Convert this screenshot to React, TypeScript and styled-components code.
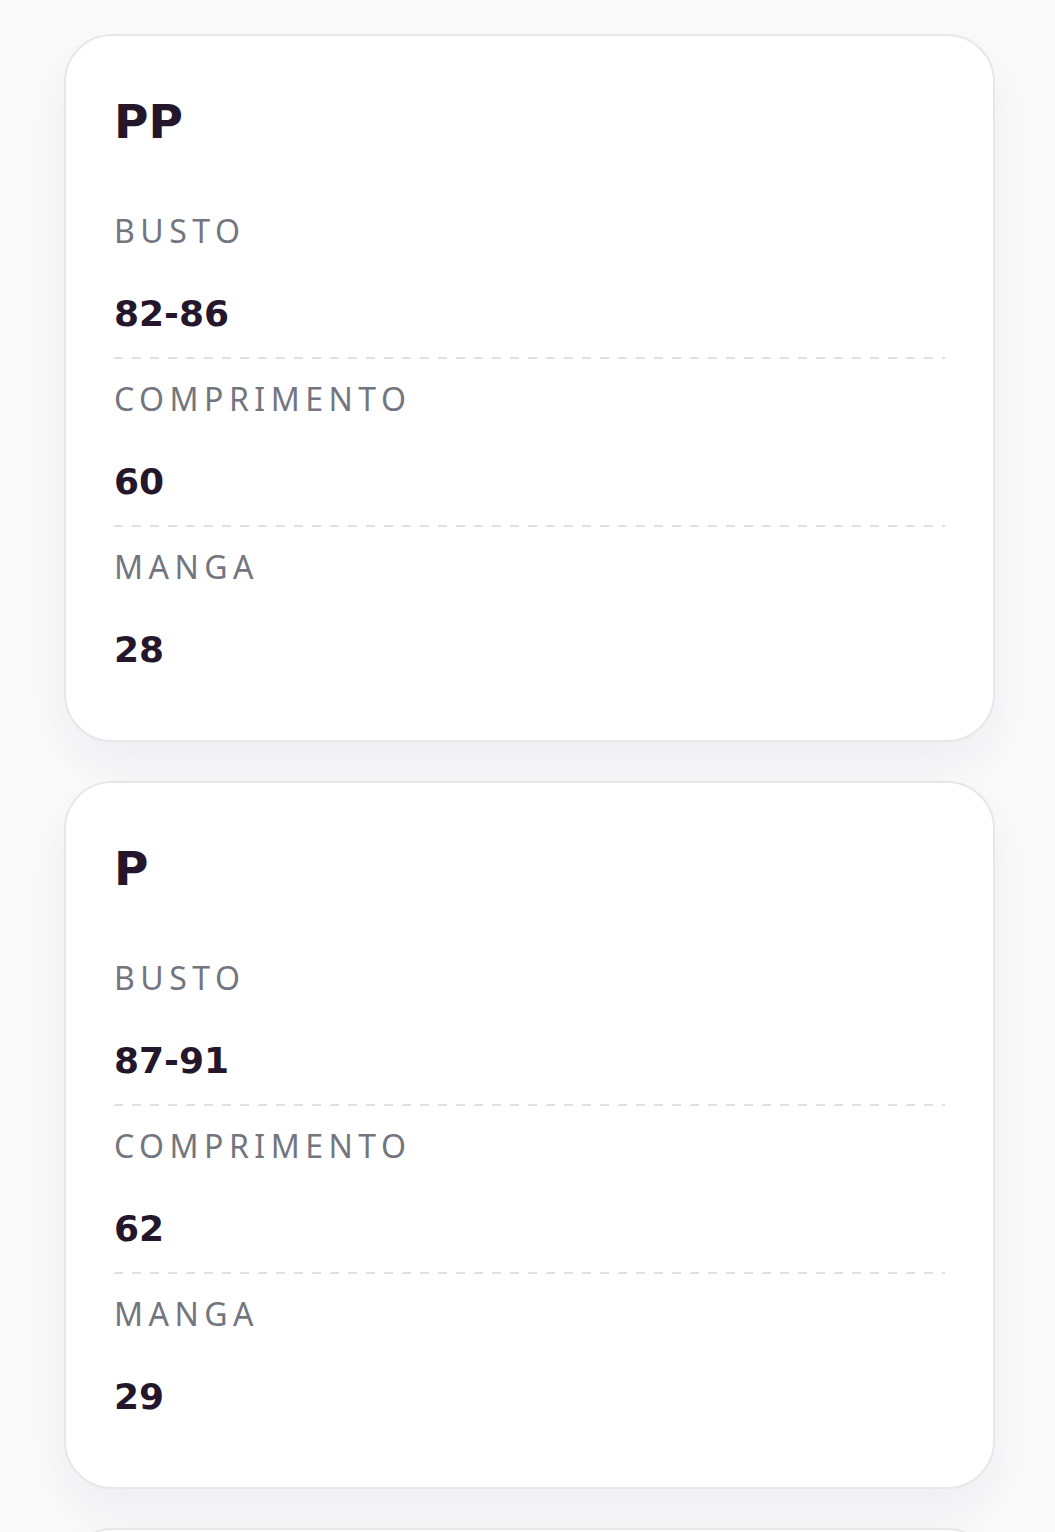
import React from 'react';
import styled, { createGlobalStyle } from 'styled-components';

interface Measure {
  label: string;
  value: string;
}

interface SizeRow {
  size: string;
  measures: Measure[];
}

const sizes: SizeRow[] = [
  {
    size: 'PP',
    measures: [
      { label: 'Busto', value: '82-86' },
      { label: 'Comprimento', value: '60' },
      { label: 'Manga', value: '28' },
    ],
  },
  {
    size: 'P',
    measures: [
      { label: 'Busto', value: '87-91' },
      { label: 'Comprimento', value: '62' },
      { label: 'Manga', value: '29' },
    ],
  },
  {
    size: 'M',
    measures: [
      { label: 'Busto', value: '92-96' },
      { label: 'Comprimento', value: '64' },
      { label: 'Manga', value: '30' },
    ],
  },
];

const App: React.FC = () => (
  <>
    <GlobalStyle />
    <Page>
      {sizes.map(row => (
        <SizeCard key={row.size}>
          <SizeTitle>{row.size}</SizeTitle>
          {row.measures.map((m, i) => (
            <React.Fragment key={m.label}>
              {i > 0 && <Divider />}
              <MeasureBlock>
                <MeasureLabel>{m.label}</MeasureLabel>
                <MeasureValue>{m.value}</MeasureValue>
              </MeasureBlock>
            </React.Fragment>
          ))}
        </SizeCard>
      ))}
    </Page>
  </>
);


const GlobalStyle = createGlobalStyle`
  html, body {
    margin: 0;
    padding: 0;
    background: #fafafb;
    font-family: "Noto Sans", "DejaVu Sans", sans-serif;
  }
`;

const Page = styled.div`
  display: flex;
  flex-direction: column;
  gap: 39px;
  padding: 34px 60px 0 64px;
  height: 1532px;
  box-sizing: border-box;
  overflow: hidden;
`;

const SizeCard = styled.section`
  flex-shrink: 0;
  width: 931px;
  box-sizing: border-box;
  background: #ffffff;
  border: 2px solid #e7e6ea;
  border-radius: 48px;
  padding: 56px 48px 67px;
  box-shadow: 0 22px 48px rgba(40, 25, 60, 0.055);
`;

const SizeTitle = styled.h2`
  margin: 0 0 59px;
  font-family: "DejaVu Sans", "Noto Sans", sans-serif;
  font-size: 47px;
  line-height: 60px;
  font-weight: 700;
  color: #24172b;
`;

const MeasureBlock = styled.div`
  display: flex;
  flex-direction: column;
  gap: 40px;
`;

const MeasureLabel = styled.div`
  font-size: 32px;
  line-height: 40px;
  font-weight: 400;
  letter-spacing: 5.5px;
  text-transform: uppercase;
  color: #737680;
`;

const MeasureValue = styled.div`
  font-family: "DejaVu Sans", "Noto Sans", sans-serif;
  font-size: 36px;
  line-height: 46px;
  font-weight: 700;
  color: #24172b;
`;

const Divider = styled.div`
  height: 2px;
  margin: 20px 0;
  background-image: repeating-linear-gradient(
    to right,
    #e0dfe3 0,
    #e0dfe3 9px,
    transparent 9px,
    transparent 18px
  );
`;

export default App;
